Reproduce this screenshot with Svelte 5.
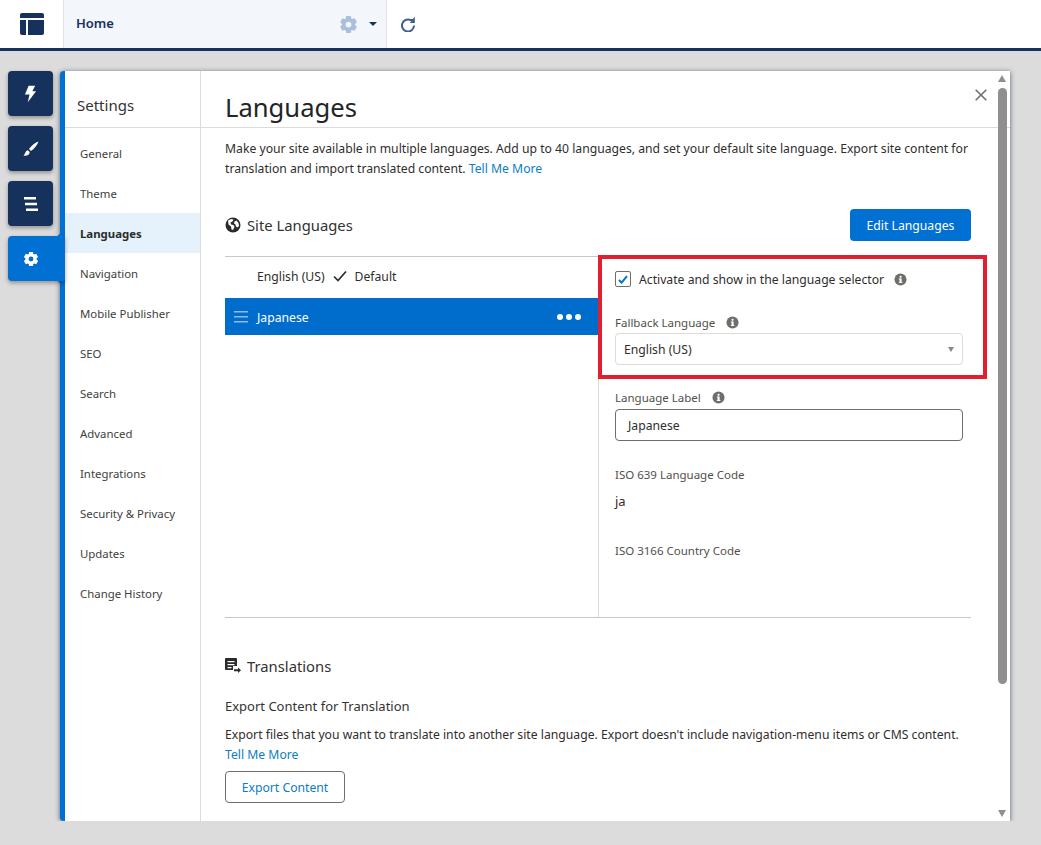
<script>
  const navItems = ['General', 'Theme', 'Languages', 'Navigation', 'Mobile Publisher', 'SEO', 'Search', 'Advanced', 'Integrations', 'Security & Privacy', 'Updates', 'Change History']

  // six-toothed cog, centred on 12,12
  function gear(r1, r2, hole) {
    let d = ''
    for (let i = 0; i < 6; i++) {
      const a = (i * Math.PI) / 3 - Math.PI / 2
      const pts = [[r1, a - 0.42], [r2, a - 0.26], [r2, a + 0.26], [r1, a + 0.42]]
      for (const [r, t] of pts) {
        d += `${d ? 'L' : 'M'}${(12 + r * Math.cos(t)).toFixed(2)} ${(12 + r * Math.sin(t)).toFixed(2)}`
      }
    }
    d += `Z M${12 - hole} 12a${hole} ${hole} 0 1 0 ${hole * 2} 0a${hole} ${hole} 0 1 0 ${-hole * 2} 0Z`
    return d
  }
  const cog = gear(8.4, 11, 3.6)
</script>

{#snippet info()}
  <svg class="info" viewBox="0 0 14 14" aria-hidden="true">
    <circle cx="7" cy="7" r="6.5" fill="#706e6b" />
    <rect x="6" y="6" width="2.2" height="4.6" fill="#fff" />
    <rect x="5.2" y="9.6" width="3.8" height="1.1" fill="#fff" />
    <rect x="5.2" y="6" width="2" height="1" fill="#fff" />
    <circle cx="7.1" cy="4.1" r="1.2" fill="#fff" />
  </svg>
{/snippet}

<header class="topbar">
  <div class="logo-cell">
    <svg width="24" height="22" viewBox="0 0 24 22" aria-hidden="true">
      <path d="M2 0h20a2 2 0 0 1 2 2v3H0V2a2 2 0 0 1 2-2Z" fill="#16325c" />
      <path d="M0 7h6v15H2a2 2 0 0 1-2-2Z" fill="#16325c" />
      <path d="M8 7h16v13a2 2 0 0 1-2 2H8Z" fill="#16325c" />
    </svg>
  </div>
  <div class="home-cell">
    <span class="home-label">Home</span>
    <svg class="home-gear" width="19" height="19" viewBox="0 0 24 24" aria-hidden="true"><path d={cog} fill="#a9bfdc" fill-rule="evenodd" /></svg>
    <span class="caret"></span>
  </div>
  <div class="refresh-cell">
    <svg width="16" height="16" viewBox="0 0 16 16" fill="none" aria-hidden="true">
      <path d="M14 9.500A6 6 0 1 1 10.500 4H14" stroke="#3f5f8c" stroke-width="2" />
      <path d="M14.800 .500v6.500H9.800Z" fill="#3f5f8c" />
    </svg>
  </div>
</header>

<div class="workspace">
  <div class="tabs">
    <div class="tab">
      <svg width="13" height="18" viewBox="0 0 14 18" aria-hidden="true"><path d="M5 0h7L9 6h4L4 18l2-8.500H1Z" fill="#fff" /></svg>
    </div>
    <div class="tab">
      <svg width="16" height="16" viewBox="0 0 16 16" aria-hidden="true"><path d="M15.500.5c-3 1-7 4-9.500 7.500l2 2C11.500 7.500 14.500 3.500 15.500.5ZM4.800 9.200C2.500 9.500 2.500 12.500.500 14.500c3 .800 6-.200 6.200-3.400Z" fill="#fff" /></svg>
    </div>
    <div class="tab">
      <svg width="16" height="16" viewBox="0 0 16 16" aria-hidden="true"><path d="M1 1h12v2.500H1ZM2 6.800h12v2.500H2ZM3 12.500h12V15H3Z" fill="#fff" /></svg>
    </div>
    <div class="tab active">
      <svg width="16" height="16" viewBox="0 0 24 24" aria-hidden="true"><path d={cog} fill="#fff" fill-rule="evenodd" /></svg>
    </div>
  </div>

  <section class="panel">
    <nav class="side">
      <h2 class="side-title">Settings</h2>
      <ul class="side-list">
        {#each navItems as item}
          <li class:current={item === 'Languages'}>{item}</li>
        {/each}
      </ul>
    </nav>

    <main class="content">
      <div class="title-bar"><h1>Languages</h1></div>
      <div class="body">
        <p class="intro">Make your site available in multiple languages. Add up to 40 languages, and set your default site language. Export site content for translation and import translated content. <a href="#more">Tell Me More</a></p>

        <div class="section-head">
          <h3>
            <svg width="16" height="16" viewBox="0 0 16 16" aria-hidden="true">
              <circle cx="8" cy="8" r="7.500" fill="#2b2b2b" />
              <path d="M3 3.500l3-1.500 2.500.500-1 2-2 1 .500 2 2.500.500 1 2-1.500 3-1.500-.500-.500-3-2.500-2Zm8.500 0l2 2.500.500 3-1.500 1.500-1.500-1-.500-2-1.500-1 .500-2Z" fill="#fff" />
            </svg>
            Site Languages
          </h3>
          <button class="primary">Edit Languages</button>
        </div>

        <div class="lang-area">
          <div class="lang-list">
            <div class="lang-row">
              <span>English (US)</span>
              <svg width="14" height="12" viewBox="0 0 14 12" fill="none" aria-hidden="true"><path d="M1 6.500l4 4L13 1.500" stroke="#2b2b2b" stroke-width="1.700" /></svg>
              <span>Default</span>
            </div>
            <div class="lang-row selected">
              <svg class="drag" width="14" height="12" viewBox="0 0 14 12" aria-hidden="true"><path d="M0 0h14v1.500H0ZM0 5h14v1.500H0ZM0 10h14v1.500H0Z" fill="#8ebbe8" /></svg>
              <span>Japanese</span>
              <span class="dots"><i></i><i></i><i></i></span>
            </div>
          </div>

          <div class="lang-detail">
            <label class="activate">
              <span class="checkbox">
                <svg width="10" height="9" viewBox="0 0 10 9" fill="none" aria-hidden="true"><path d="M1 5l2.600 2.600L9 1.200" stroke="#0070d2" stroke-width="2" /></svg>
              </span>
              <span>Activate and show in the language selector</span>
              {@render info()}
            </label>

            <div class="field-label fallback">Fallback Language {@render info()}</div>
            <div class="select">
              <span>English (US)</span>
              <span class="select-caret"></span>
            </div>

            <div class="field-label lang-label">Language Label {@render info()}</div>
            <div class="input">Japanese</div>

            <div class="field-label iso-a">ISO 639 Language Code</div>
            <div class="iso-value">ja</div>
            <div class="field-label iso-b">ISO 3166 Country Code</div>
          </div>
        </div>

        <h3 class="translations">
          <svg width="16" height="16" viewBox="0 0 16 16" aria-hidden="true">
            <path d="M1 0h10a1 1 0 0 1 1 1v7H8v4H1a1 1 0 0 1-1-1V1a1 1 0 0 1 1-1Z" fill="#2b2b2b" />
            <path d="M2.500 3h7v1.200h-7ZM2.500 6h7v1.200h-7ZM2.500 9h4v1.200h-4Z" fill="#fff" />
            <path d="M9 11.200h4V9.500l3 2.700-3 2.700v-1.700H9Z" fill="#2b2b2b" />
          </svg>
          Translations
        </h3>
        <h4>Export Content for Translation</h4>
        <p class="export-copy">Export files that you want to translate into another site language. Export doesn't include navigation-menu items or CMS content. <a href="#more">Tell Me More</a></p>
        <button class="outline">Export Content</button>
      </div>
    </main>

    <button class="close" aria-label="Close">
      <svg width="12" height="12" viewBox="0 0 12 12" fill="none"><path d="M.700.700l10.600 10.600M11.300.700L.700 11.300" stroke="#706e6b" stroke-width="1.600" /></svg>
    </button>

    <div class="scrollbar">
      <span class="arrow up"></span>
      <span class="thumb"></span>
      <span class="arrow down"></span>
    </div>

    <div class="callout"></div>
  </section>
</div>

<style>
  :global(body) {
    margin: 0;
    background: #dcdcdc;
    font-family: "Noto Sans", "Open Sans", sans-serif;
    color: #2f2e2c;
    font-size: 12.2px;
  }

  .topbar {
    display: flex;
    height: 48px;
    background: #fff;
    border-bottom: 3px solid #16325c;
  }

  .logo-cell {
    width: 63px;
    display: flex;
    align-items: center;
    justify-content: center;
  }

  .home-cell {
    width: 324px;
    display: flex;
    align-items: center;
    box-sizing: border-box;
    padding: 0 9px 0 12px;
    background: #f3f6fb;
    border-left: 1px solid #dfe3e9;
    border-right: 1px solid #dfe3e9;
  }

  .home-label {
    color: #16325c;
    font-weight: 600;
    font-size: 13px;
    line-height: 16px;
    padding-bottom: 2px;
    flex: 1;
  }

  .home-gear {
    margin-right: 11px;
  }

  .caret {
    width: 0;
    height: 0;
    border: 4px solid transparent;
    border-top: 4px solid #16325c;
    border-bottom: 0;
    margin-top: -1px;
  }

  .refresh-cell {
    padding-left: 13px;
    display: flex;
    align-items: center;
  }

  .workspace {
    display: flex;
    padding: 20px 31px 0 8px;
  }

  .tabs {
    width: 52px;
    display: flex;
    flex-direction: column;
    gap: 10px;
    position: relative;
    z-index: 2;
  }

  .tab {
    width: 45px;
    height: 45px;
    box-sizing: border-box;
    display: flex;
    align-items: center;
    justify-content: center;
    background: #16325c;
    border-radius: 4px;
    box-shadow: 0 2px 4px rgba(0, 0, 0, 0.35);
  }

  .tab.active {
    width: 57px;
    padding-right: 12px;
    background: #0070d2;
    border-radius: 4px 0 0 4px;
    position: relative;
  }

  .tab.active::before,
  .tab.active::after {
    content: '';
    position: absolute;
    right: 5px;
    width: 4px;
    height: 4px;
  }

  .tab.active::before {
    top: -4px;
    background: radial-gradient(circle at 0 0, transparent 4px, #0070d2 4px);
  }

  .tab.active::after {
    bottom: -4px;
    background: radial-gradient(circle at 0 100%, transparent 4px, #0070d2 4px);
  }

  .panel {
    position: relative;
    display: flex;
    width: 950px;
    height: 750px;
    box-sizing: border-box;
    background: #fff;
    border-left: 5px solid #0070d2;
    border-radius: 4px 0 0 4px;
    box-shadow: 0 1px 5px rgba(20, 40, 70, 0.7);
  }

  .side {
    width: 136px;
    flex: none;
    box-sizing: border-box;
    border-right: 1px solid #dddbda;
  }

  .side-title {
    margin: 0;
    height: 57px;
    box-sizing: border-box;
    border-bottom: 1px solid #dddbda;
    padding: 24px 0 0 12px;
    font-size: 15px;
    line-height: 21px;
    font-weight: 400;
    color: #333;
  }

  .side-list {
    list-style: none;
    margin: 0;
    padding: 5px 0 0;
  }

  .side-list li {
    height: 40px;
    line-height: 42px;
    padding-left: 15px;
    font-size: 11.4px;
    color: #3e3e3c;
  }

  .side-list li.current {
    background: #e5f1fb;
    font-weight: 700;
    color: #2b2b2b;
  }

  .content {
    flex: 1;
    min-width: 0;
  }

  .title-bar {
    height: 57px;
    box-sizing: border-box;
    border-bottom: 1px solid #dddbda;
    padding-left: 24px;
  }

  h1 {
    margin: 0;
    padding-top: 19px;
    font-size: 25.6px;
    line-height: 35px;
    font-weight: 400;
    color: #242424;
  }

  .body {
    padding: 11px 39px 0 24px;
  }

  .intro {
    margin: 0;
    line-height: 20px;
  }

  a {
    color: #0b7dc4;
    text-decoration: none;
  }

  .section-head {
    display: flex;
    justify-content: space-between;
    align-items: center;
    margin-top: 30px;
    height: 32px;
  }

  h3 {
    margin: 0;
    display: flex;
    align-items: center;
    gap: 6px;
    font-size: 14.8px;
    font-weight: 400;
    color: #333;
  }

  button {
    font: inherit;
    cursor: pointer;
  }

  .primary {
    width: 121px;
    height: 32px;
    padding: 0;
    border: 0;
    border-radius: 4px;
    background: #0070d2;
    color: #fff;
  }

  .lang-area {
    display: flex;
    height: 360px;
    margin-top: 15px;
    border-top: 1px solid #c9c7c5;
    border-bottom: 1px solid #c9c7c5;
  }

  .lang-list {
    width: 373px;
    flex: none;
  }

  .lang-row {
    display: flex;
    align-items: center;
    gap: 8px;
    height: 41px;
    padding: 0 0 3px 32px;
    box-sizing: border-box;
  }

  .lang-row.selected {
    position: relative;
    height: 37px;
    padding: 1px 0 0 32px;
    background: #006dcc;
    color: #fff;
  }

  .drag {
    position: absolute;
    left: 9px;
  }

  .dots {
    margin-left: auto;
    margin-right: 17px;
    display: flex;
    gap: 3px;
  }

  .dots i {
    width: 6px;
    height: 6px;
    border-radius: 50%;
    background: #fff;
  }

  .lang-detail {
    flex: 1;
    border-left: 1px solid #dddbda;
    padding: 0 8px 0 16px;
  }

  .activate {
    display: flex;
    align-items: center;
    margin-top: 14px;
    height: 16px;
  }

  .checkbox {
    width: 16px;
    height: 16px;
    box-sizing: border-box;
    margin-right: 8px;
    display: flex;
    align-items: center;
    justify-content: center;
    border: 1px solid #706e6b;
    border-radius: 2px;
  }

  .info {
    width: 13px;
    height: 13px;
    flex: none;
  }

  .activate .info {
    margin-left: 10px;
  }

  .field-label {
    display: flex;
    align-items: center;
    gap: 11px;
    height: 16px;
    box-sizing: border-box;
    padding-bottom: 2px;
    font-size: 11.5px;
    color: #514f4d;
  }

  .fallback {
    margin-top: 28px;
  }

  .select,
  .input {
    display: flex;
    align-items: center;
    height: 32px;
    box-sizing: border-box;
    border-radius: 4px;
  }

  .select {
    justify-content: space-between;
    margin-top: 2px;
    padding: 1px 8px 0;
    border: 1px solid #dddbda;
  }

  .select-caret {
    width: 0;
    height: 0;
    border: 3px solid transparent;
    border-top: 5px solid #8a8886;
    border-bottom: 0;
  }

  .lang-label {
    margin-top: 25px;
  }

  .input {
    margin-top: 3px;
    padding-left: 12px;
    border: 1px solid #706e6b;
  }

  .iso-a {
    margin-top: 26px;
  }

  .iso-value {
    margin-top: 9px;
    height: 18px;
    line-height: 18px;
    font-size: 13px;
  }

  .iso-b {
    margin-top: 33px;
  }

  .translations {
    margin-top: 38px;
    height: 20px;
  }

  h4 {
    margin: 20px 0 0;
    font-size: 13px;
    line-height: 20px;
    font-weight: 400;
    color: #333;
  }

  .export-copy {
    margin: 9px 0 0;
    line-height: 20px;
  }

  .outline {
    display: block;
    margin-top: 6px;
    width: 120px;
    height: 32px;
    padding: 0;
    border: 1px solid #706e6b;
    border-radius: 4px;
    background: #fff;
    color: #0b7dc4;
  }

  .close {
    position: absolute;
    top: 18px;
    right: 23px;
    padding: 0;
    border: 0;
    background: none;
    display: flex;
  }

  .scrollbar {
    position: absolute;
    top: 0;
    bottom: 0;
    right: 3px;
    width: 9px;
  }

  .thumb {
    position: absolute;
    top: 17px;
    left: 0;
    width: 9px;
    height: 596px;
    border-radius: 5px;
    background: #8f8f8f;
  }

  .arrow {
    position: absolute;
    left: 0;
    width: 0;
    height: 0;
    border: 4.500px solid transparent;
  }

  .arrow.up {
    top: 4px;
    border-top: 0;
    border-bottom: 7px solid #8f8f8f;
  }

  .arrow.down {
    bottom: 4px;
    border-bottom: 0;
    border-top: 7px solid #8f8f8f;
  }

  .callout {
    position: absolute;
    left: 533px;
    top: 184px;
    width: 389px;
    height: 124px;
    box-sizing: border-box;
    border: 4px solid #e0202f;
    pointer-events: none;
  }
</style>
